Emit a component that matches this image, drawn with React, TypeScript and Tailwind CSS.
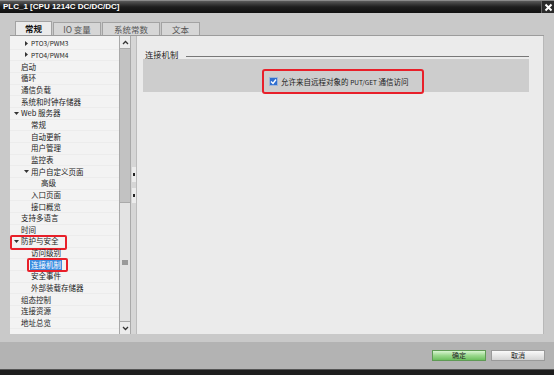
import React from 'react';

type Item = {
	t: string;
	l: 1 | 2 | 3;
	a?: 'r' | 'd';
	sel?: boolean;
	box?: 'wide' | 'narrow';
};

const items: Item[] = [
	{ t: 'PTO3/PWM3', l: 2, a: 'r' },
	{ t: 'PTO4/PWM4', l: 2, a: 'r' },
	{ t: '启动', l: 1 },
	{ t: '循环', l: 1 },
	{ t: '通信负载', l: 1 },
	{ t: '系统和时钟存储器', l: 1 },
	{ t: 'Web 服务器', l: 1, a: 'd' },
	{ t: '常规', l: 2 },
	{ t: '自动更新', l: 2 },
	{ t: '用户管理', l: 2 },
	{ t: '监控表', l: 2 },
	{ t: '用户自定义页面', l: 2, a: 'd' },
	{ t: '高级', l: 3 },
	{ t: '入口页面', l: 2 },
	{ t: '接口概览', l: 2 },
	{ t: '支持多语言', l: 1 },
	{ t: '时间', l: 1 },
	{ t: '防护与安全', l: 1, a: 'd', box: 'wide' },
	{ t: '访问级别', l: 2 },
	{ t: '连接机制', l: 2, sel: true, box: 'narrow' },
	{ t: '安全事件', l: 2 },
	{ t: '外部装载存储器', l: 2 },
	{ t: '组态控制', l: 1 },
	{ t: '连接资源', l: 1 },
	{ t: '地址总览', l: 1 },
];

const indent = { 1: 'pl-[4px]', 2: 'pl-[14px]', 3: 'pl-[24px]' };

function Arrow({ dir }: { dir?: 'r' | 'd' }) {
	if (!dir) return <span className="w-[7px] shrink-0" />;
	return (
		<span className="w-[7px] shrink-0 flex items-center">
			<svg width="5" height="5" viewBox="0 0 5 5">
				{dir === 'r' ? <polygon points="1,0 4,2.5 1,5" fill="#333" /> : <polygon points="0,1 5,1 2.5,4" fill="#333" />}
			</svg>
		</span>
	);
}

function TreeRow({ item }: { item: Item }) {
	return (
		<div className={`relative h-[11.67px] flex items-center border-b border-[#ececec] ${indent[item.l]}`}>
			<Arrow dir={item.a} />
			<span
				className={`leading-[10px] whitespace-nowrap ${item.a === 'r' ? 'text-[6.5px]' : 'text-[7.5px]'} ${
					item.sel ? 'bg-[#3b8de0] text-white px-[1px] -ml-[1px]' : 'text-[#222]'
				}`}
			>
				{item.t}
			</span>
			{item.box === 'wide' && (
				<span className="absolute left-0 top-[-1.5px] w-[57px] h-[15px] border-2 border-[#e8202a] rounded-[2px]" />
			)}
			{item.box === 'narrow' && (
				<span className="absolute left-[17px] top-[-1px] w-[41px] h-[14px] border-2 border-[#e8202a] rounded-[2px]" />
			)}
		</div>
	);
}

function Scrollbar() {
	return (
		<div className="w-[12px] flex flex-col border-x border-[#a9a9a9] bg-[#c2c2c2]">
			<div className="h-[13px] bg-[#ececec] border-b border-[#a9a9a9] flex items-center justify-center">
				<svg width="7" height="5" viewBox="0 0 7 5">
					<polyline points="1,4 3.5,1.5 6,4" fill="none" stroke="#333" strokeWidth="1.3" />
				</svg>
			</div>
			<div className="h-[153px]" />
			<div className="flex-1 bg-[#e3e3e3] border-y border-[#a9a9a9] flex items-center justify-center">
				<div className="w-[6px] h-[5px] bg-[#9a9a9a]" />
			</div>
			<div className="h-[12px] bg-[#ececec] flex items-center justify-center">
				<svg width="7" height="5" viewBox="0 0 7 5">
					<polyline points="1,1 3.5,3.5 6,1" fill="none" stroke="#333" strokeWidth="1.3" />
				</svg>
			</div>
		</div>
	);
}

function Splitter() {
	return (
		<div className="w-[6px] bg-[#d6d6d6] border-r border-[#bcbcbc] flex flex-col items-center pt-[131px] gap-[6px]">
			<div className="w-[4px] h-[15px] bg-[#ececec] flex items-center justify-center">
				<div className="w-[2px] h-[3px] bg-[#222]" />
			</div>
			<div className="w-[4px] h-[15px] bg-[#ececec] flex items-center justify-center">
				<div className="w-[2px] h-[3px] bg-[#222]" />
			</div>
		</div>
	);
}

export default function App() {
	const tabs = [
		{ t: '常规', w: 'w-[37px]', active: true },
		{ t: 'IO 变量', w: 'w-[48px]' },
		{ t: '系统常数', w: 'w-[58px]' },
		{ t: '文本', w: 'w-[39px]' },
	];

	return (
		<div className="w-[554px] h-[375px] bg-[#c9c9c9] flex flex-col overflow-hidden" style={{ fontFamily: '"Noto Sans CJK SC", "Noto Sans", sans-serif' }}>
			{/* 标题栏 */}
			<div className="h-[13px] flex items-center bg-gradient-to-b from-[#5a5a5a] via-[#1e1e1e] to-[#111] border-t border-[#8a8a8a]">
				<span className="pl-[3px] text-white text-[8px] font-bold leading-none flex-1" style={{ fontFamily: '"Liberation Sans", sans-serif' }}>
					PLC_1 [CPU 1214C DC/DC/DC]
				</span>
				<span className="w-[13px] h-[12px] flex items-center justify-center bg-[#2a2a2a] border-l border-[#666]">
					<svg width="9" height="9" viewBox="0 0 9 9">
						<path d="M1.5 1.5 L7.5 7.5 M7.5 1.5 L1.5 7.5" stroke="white" strokeWidth="2" />
					</svg>
				</span>
			</div>

			<div className="flex-1 flex flex-col pl-[10px] pr-[10px] pt-[9px]">
				{/* 选项卡 */}
				<div className="h-[14px] flex items-end pl-[5px] gap-[1px] border-b border-[#9c9c9c]">
					{tabs.map((tab) => (
						<div
							key={tab.t}
							className={`${tab.w} flex items-center justify-center border border-b-0 border-[#a3a3a3] ${
								tab.active ? 'h-[14px] bg-[#ebebeb] font-bold text-[#111]' : 'h-[13px] bg-[#d6d6d6] text-[#555]'
							} text-[8.5px] leading-none`}
						>
							{tab.t}
						</div>
					))}
				</div>

				{/* 主体 */}
				<div className="h-[298px] flex">
					<div className="w-[109px] bg-[#f3f3f3] pt-[2px]">
						{items.map((it) => (
							<TreeRow key={it.t} item={it} />
						))}
					</div>
					<Scrollbar />
					<Splitter />
					<div className="flex-1 bg-[#ebebeb] border-r border-[#b8b8b8] pl-[6px] pr-[14px] pt-[8px]">
						<div className="flex items-end h-[14px]">
							<span className="text-[8.3px] leading-none text-[#222] pl-[2px]">连接机制</span>
							<div className="flex-1 ml-[8px] border-b border-[#777] mb-[1px]" />
						</div>
						<div className="mt-[1px] h-[33px] bg-[#cdcdcd] pl-[119px] pt-[7px]">
							<div className="inline-flex items-center h-[25px] border-2 border-[#e8202a] rounded-[3px] pl-[5px] pr-[13px]">
								<span className="w-[9px] h-[9px] bg-[#2f6fd0] border border-[#9fb6d8] flex items-center justify-center">
									<svg width="7" height="7" viewBox="0 0 7 7">
										<polyline points="1,3.5 3,5.5 6,1.5" fill="none" stroke="white" strokeWidth="1.4" />
									</svg>
								</span>
								<span className="ml-[3px] text-[7.5px] leading-none text-[#222] whitespace-nowrap">
									允许来自远程对象的 <span className="text-[6.5px]">PUT/GET</span> 通信访问
								</span>
							</div>
						</div>
					</div>
				</div>
			</div>

			{/* 底部按钮 */}
			<div className="h-[7px] bg-[#c9c9c9]" />
			<div className="h-[27px] bg-[#b3b3b3] flex items-start justify-end gap-[5px] pr-[9px] pt-[8px]">
				<button className="w-[54px] h-[11px] flex items-center justify-center text-[7px] leading-none text-[#222] border border-[#5f9a55] bg-gradient-to-b from-[#d9f5d2] via-[#9ad88d] to-[#6cbf5e]">
					确定
				</button>
				<button className="w-[54px] h-[11px] flex items-center justify-center text-[7px] leading-none text-[#222] border border-[#9a9a9a] bg-gradient-to-b from-[#fafafa] to-[#d4d4d4]">
					取消
				</button>
			</div>
			<div className="h-[6px] bg-[#1e1e1e] border-t border-[#555]" />
		</div>
	);
}
